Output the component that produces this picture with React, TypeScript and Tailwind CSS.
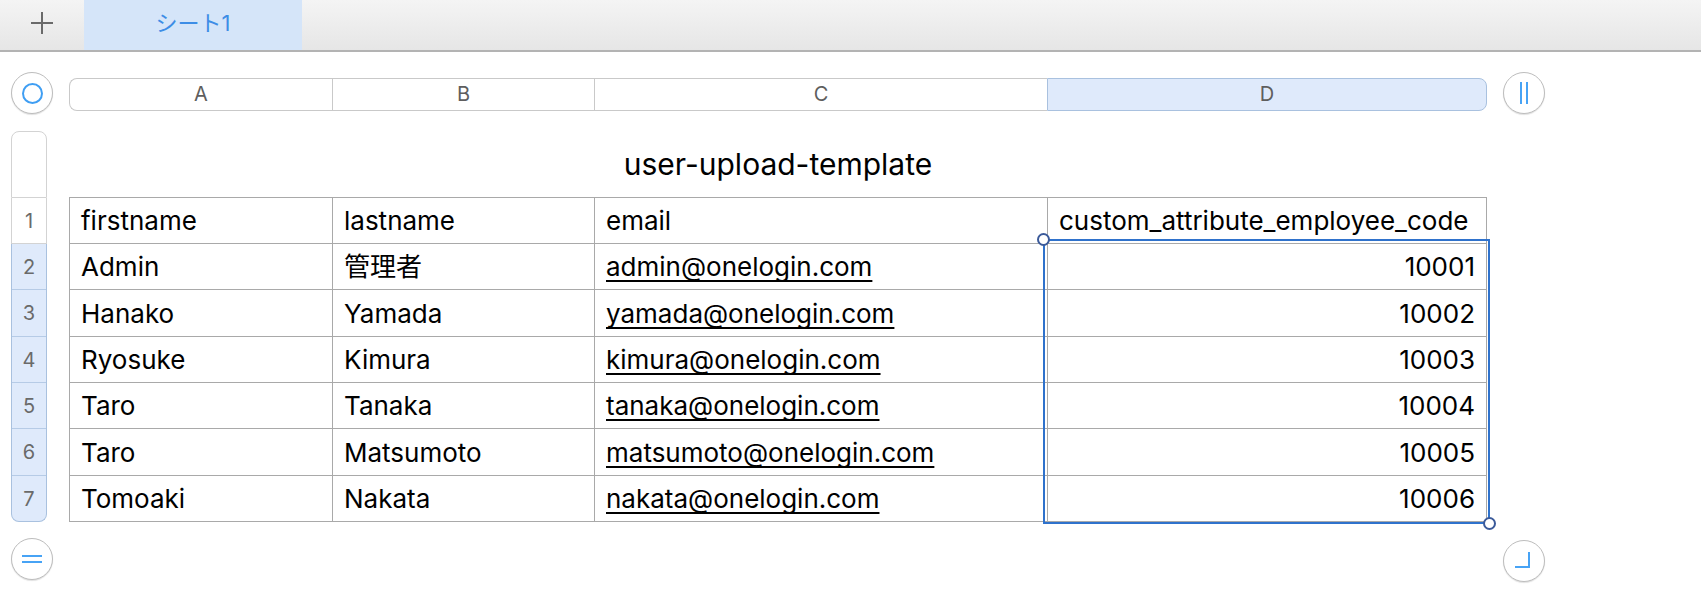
import React from "react";

const rows = [
  ["Admin", "管理者", "admin@onelogin.com", "10001"],
  ["Hanako", "Yamada", "yamada@onelogin.com", "10002"],
  ["Ryosuke", "Kimura", "kimura@onelogin.com", "10003"],
  ["Taro", "Tanaka", "tanaka@onelogin.com", "10004"],
  ["Taro", "Matsumoto", "matsumoto@onelogin.com", "10005"],
  ["Tomoaki", "Nakata", "nakata@onelogin.com", "10006"],
];

// row heights incl. bottom border: header row, then data rows
const rowH = ["h-[46px]", "h-[46px]", "h-[47px]", "h-[46px]", "h-[46px]", "h-[47px]", "h-[46px]"];

function RoundButton({ children }: { children: React.ReactNode }) {
  return (
    <div className="w-[42px] h-[42px] rounded-full border border-[#bdbdbd] bg-white shadow-[0_1px_1px_rgba(0,0,0,0.12)] flex items-center justify-center shrink-0">
      {children}
    </div>
  );
}

export default function App() {
  return (
    <div className="w-[1701px] h-[596px] bg-white overflow-hidden font-[Inter,'Noto_Sans_CJK_JP',sans-serif] text-black">
      {/* sheet tabs */}
      <div className="h-[52px] flex border-b-2 border-[#b3b3b3] bg-gradient-to-b from-[#f4f4f4] to-[#e6e6e6]">
        <div className="w-[84px] flex items-center justify-center">
          <svg width="22" height="22" viewBox="0 0 22 22" className="-mt-[4px]">
            <path d="M11 0v22M0 11h22" stroke="#6a6a6a" strokeWidth="2" />
          </svg>
        </div>
        <div className="w-[218px] bg-[#d5e5f9] flex items-center justify-center text-[22px] text-[#3d8de6] pb-[4px]">
          シート1
        </div>
      </div>

      <div className="pl-[11px] pt-[20px] flex flex-col">
        {/* column headers */}
        <div className="flex items-center h-[42px]">
          <RoundButton>
            <div className="w-[21px] h-[21px] rounded-full border-[2.5px] border-[#3f9ef3]" />
          </RoundButton>
          <div className="ml-[16px] w-[1418px] h-[33px] flex text-[20px] text-[#5e5e5e] mt-[2px]">
            <div className="w-[263px] border-y border-l border-[#c9c9c9] rounded-l-[8px] flex items-center justify-center">A</div>
            <div className="w-[262px] border-y border-l border-[#c9c9c9] flex items-center justify-center">B</div>
            <div className="w-[453px] border-y border-l border-[#c9c9c9] flex items-center justify-center">C</div>
            <div className="w-[440px] border border-[#a9c1df] bg-[#dfeafb] rounded-r-[8px] flex items-center justify-center">D</div>
          </div>
          <div className="ml-[16px]">
            <RoundButton>
              <svg width="12" height="22" viewBox="0 0 12 22">
                <path d="M3 0v22M9 0v22" stroke="#47a3f5" strokeWidth="2" />
              </svg>
            </RoundButton>
          </div>
        </div>

        {/* sheet body */}
        <div className="flex mt-[17px]">
          <div className="w-[36px] flex flex-col text-[20px] text-[#6a6a6a]">
            <div className="h-[67px] border border-[#d3d3d3] rounded-t-[8px]" />
            <div className={`${rowH[0]} border-x border-b border-[#d3d3d3] flex items-center justify-center`}>1</div>
            <div className="border-x border-b border-[#a9c1df] bg-[#dfeafb] rounded-b-[8px] flex flex-col">
              {rows.map((_, i) => (
                <div
                  key={i}
                  className={`${rowH[i + 1]} flex items-center justify-center ${i < rows.length - 1 ? "border-b border-[#b6cbe6]" : "-mb-px"}`}
                >
                  {i + 2}
                </div>
              ))}
            </div>
          </div>

          <div className="ml-[22px] w-[1418px] flex flex-col">
            <div className="h-[66px] flex items-center justify-center text-[30px]">user-upload-template</div>
            <div className="relative">
              <div className="grid grid-cols-[263px_262px_453px_439px] border-t border-l border-[#a9a9a9] text-[26px]">
                {[["firstname", "lastname", "email", "custom_attribute_employee_code"], ...rows].map((r, ri) =>
                  r.map((c, ci) => (
                    <div
                      key={`${ri}-${ci}`}
                      className={`${rowH[ri]} border-r border-b border-[#a9a9a9] flex items-center px-[11px] whitespace-nowrap ${
                        ri > 0 && ci === 3 ? "justify-end" : ""
                      }`}
                    >
                      {ri > 0 && ci === 2 ? (
                        <span className="underline underline-offset-[4px] decoration-[1.5px] [text-decoration-skip-ink:none]">{c}</span>
                      ) : (
                        c
                      )}
                    </div>
                  ))
                )}
              </div>
              {/* selection D2:D7 */}
              <div className="absolute left-[974px] top-[42px] w-[447px] h-[285px] border-2 border-[#2f72cc] pointer-events-none">
                <div className="absolute -left-[8px] -top-[8px] w-[13px] h-[13px] rounded-full bg-white border-2 border-[#3b5a9a]" />
                <div className="absolute -right-[8px] -bottom-[8px] w-[13px] h-[13px] rounded-full bg-white border-2 border-[#3b5a9a]" />
              </div>
            </div>
          </div>
        </div>

        {/* bottom controls */}
        <div className="flex justify-between w-[1534px] mt-[16px]">
          <RoundButton>
            <svg width="20" height="10" viewBox="0 0 20 10">
              <path d="M0 2h20M0 8h20" stroke="#47a3f5" strokeWidth="2" />
            </svg>
          </RoundButton>
          <div className="mt-[2px]">
            <RoundButton>
              <svg width="18" height="18" viewBox="0 0 18 18">
                <path d="M14 0v15H0" stroke="#47a3f5" strokeWidth="2" fill="none" />
              </svg>
            </RoundButton>
          </div>
        </div>
      </div>
    </div>
  );
}
